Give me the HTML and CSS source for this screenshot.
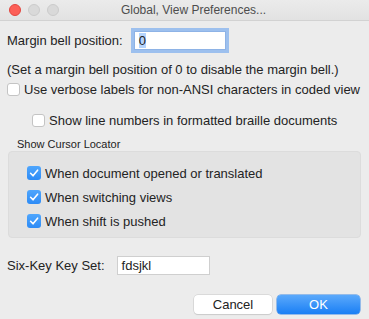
FILE: index.html
```html
<!DOCTYPE html>
<html lang="en">

<head>
    <meta charset="UTF-8">
    <meta name="viewport" content="width=device-width, initial-scale=1.0">
    <title>Global, View Preferences...</title>
    <link rel="stylesheet" href="styles.css">
</head>

<body>
    <div class="window">
        <div class="titlebar">
            <div class="lights">
                <span class="light red"></span>
                <span class="light"></span>
                <span class="light"></span>
            </div>
            <div class="title">Global, View Preferences...</div>
        </div>

        <div class="content">
            <div class="field-row bell">
                <span class="label">Margin bell position:</span>
                <span class="textbox focused"><span class="sel">0</span></span>
            </div>

            <p class="note">(Set a margin bell position of 0 to disable the margin bell.)</p>

            <label class="check first">
                <span class="box"></span>
                <span>Use verbose labels for non-ANSI characters in coded view</span>
            </label>
            <label class="check indent">
                <span class="box"></span>
                <span>Show line numbers in formatted braille documents</span>
            </label>

            <div class="group-title">Show Cursor Locator</div>
            <div class="group">
                <label class="check on">
                    <span class="box"><svg width="14" height="14" viewBox="0 0 14 14"><path d="M3.6 7.3 L6 9.8 L10.6 4.2" fill="none" stroke="#fff" stroke-width="1.6" stroke-linecap="round" stroke-linejoin="round"/></svg></span>
                    <span>When document opened or translated</span>
                </label>
                <label class="check on">
                    <span class="box"><svg width="14" height="14" viewBox="0 0 14 14"><path d="M3.6 7.3 L6 9.8 L10.6 4.2" fill="none" stroke="#fff" stroke-width="1.6" stroke-linecap="round" stroke-linejoin="round"/></svg></span>
                    <span>When switching views</span>
                </label>
                <label class="check on">
                    <span class="box"><svg width="14" height="14" viewBox="0 0 14 14"><path d="M3.6 7.3 L6 9.8 L10.6 4.2" fill="none" stroke="#fff" stroke-width="1.6" stroke-linecap="round" stroke-linejoin="round"/></svg></span>
                    <span>When shift is pushed</span>
                </label>
            </div>

            <div class="field-row keys">
                <span class="label">Six-Key Key Set:</span>
                <span class="textbox">fdsjkl</span>
            </div>

            <div class="buttons">
                <button class="btn">Cancel</button>
                <button class="btn primary">OK</button>
            </div>
        </div>
    </div>
</body>

</html>
```

FILE: styles.css
```css
html,
body {
    width: 100%;
    height: 100%;
    margin: 0;
    padding: 0;
    background-color: #ececec;
}

body {
    font-family: "Liberation Sans", Arial, sans-serif;
    font-size: 13px;
    color: #232323;
}

.window {
    width: 369px;
    height: 319px;
    overflow: hidden;
}

/* 标题栏 */
.titlebar {
    height: 20px;
    border-bottom: 1px solid #d2d2d2;
    background: linear-gradient(#ebebeb, #e2e2e2);
    display: flex;
    align-items: center;
}

.lights {
    display: flex;
    gap: 7px;
    padding-left: 9px;
    width: 90px;
}

.light {
    width: 10px;
    height: 10px;
    border-radius: 50%;
    background: #d9d9d9;
    border: 1px solid #cbcbcb;
}

.light.red {
    background: #fc5f57;
    border-color: #e2463f;
}

.title {
    width: 189px;
    text-align: center;
    color: #4d4d4d;
    font-size: 12px;
}

.content {
    padding: 0 9px 0 7px;
}

.field-row {
    display: flex;
    align-items: center;
    height: 19px;
}

.bell {
    margin-top: 10px;
    gap: 11px;
}

.keys {
    margin-top: 18px;
    gap: 12px;
}

.textbox {
    box-sizing: border-box;
    height: 19px;
    background: #fff;
    border: 1px solid #cfcfcf;
    padding: 1px 4px 0;
    line-height: 16px;
}

.bell .textbox {
    width: 92px;
}

.keys .textbox {
    width: 93px;
}

.focused {
    border-color: #8eb3e6;
    box-shadow: 0 0 0 3px #9dc0ee;
}

.sel {
    background: #b5d4fd;
}

.note {
    margin: 12px 0 0;
    line-height: 16px;
}

/* 复选框 */
.check {
    display: flex;
    align-items: center;
    gap: 4px;
    height: 20px;
}

.check.first {
    margin-top: 1px;
}

.check.indent {
    margin-top: 11px;
    padding-left: 25px;
}

.box {
    box-sizing: border-box;
    width: 13px;
    height: 13px;
    border-radius: 3px;
    background: #fff;
    border: 1px solid #c4c4c4;
    display: flex;
}

.check.on {
    height: 24px;
}

.check.on .box {
    width: 14px;
    height: 14px;
    border: none;
    background: linear-gradient(#4fa6fd, #2d8bf6);
}

.group-title {
    margin-top: 7px;
    padding-left: 10px;
    font-size: 11px;
    line-height: 14px;
}

.group {
    margin-left: 1px;
    width: 353px;
    box-sizing: border-box;
    background: #e3e3e3;
    border: 1px solid #dcdcdc;
    border-radius: 4px;
    padding: 9px 0 4px 18px;
}

.buttons {
    margin-top: 20px;
    display: flex;
    justify-content: flex-end;
    gap: 5px;
}

.btn {
    height: 19px;
    padding: 0;
    font-family: inherit;
    font-size: 13px;
    border-radius: 4px;
    border: none;
    width: 78px;
    background: #fff;
    color: #222;
    box-shadow: 0 0 0 0.5px #c8c8c8, 0 1px 1px rgba(0, 0, 0, 0.12);
}

.btn.primary {
    width: 83px;
    color: #fff;
    background: linear-gradient(#5ba9fb, #1a7ff5);
    box-shadow: 0 0 0 0.5px #3c8ae6;
}
```
